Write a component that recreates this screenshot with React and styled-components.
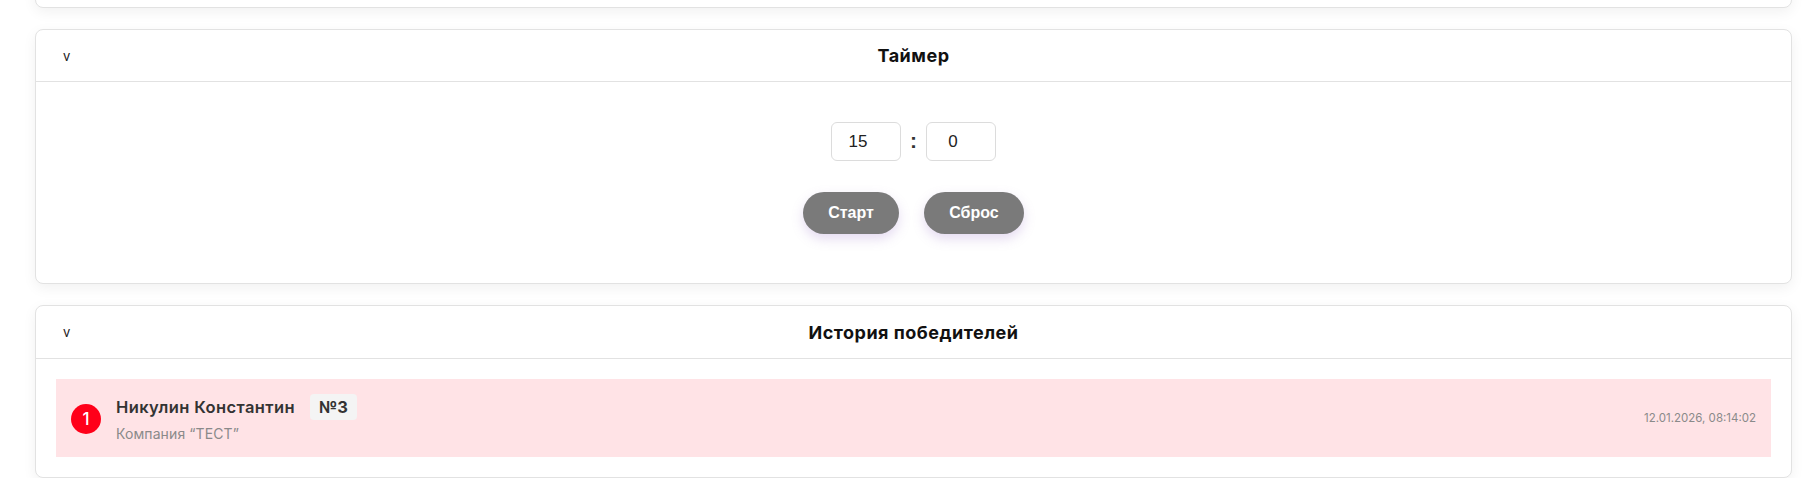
import React, { useState } from "react";
import styled, { createGlobalStyle } from "styled-components";

//-----------------------------------------------------------------------------------------------

const GlobalStyle = createGlobalStyle`
	body {
		margin: 0;
		background: #ffffff;
		font-family: "Inter", "Noto Sans", sans-serif;
		overflow: hidden;
	}
`;

const Page = styled.div`
	display: flex;
	flex-direction: column;
	gap: 21px;
	padding: 0 23px 0 35px;
`;

const Card = styled.section`
	background: #ffffff;
	border: 1px solid #e2e2e2;
	border-radius: 8px;
	box-shadow: 0 4px 14px rgba(0, 0, 0, 0.06);
`;

const HiddenCard = styled(Card)`
	height: 40px;
	margin-top: -34px;
`;

const Header = styled.div`
	display: grid;
	grid-template-columns: 1fr auto 1fr;
	align-items: center;
	height: ${(p) => p.$height || 51}px;
	padding: 0 27px;
	border-bottom: 1px solid #e2e2e2;
`;

const Toggle = styled.button`
	justify-self: start;
	background: none;
	border: none;
	padding: 0;
	font-family: "Inter", sans-serif;
	font-size: 13px;
	color: #222;
	cursor: pointer;
`;

const Title = styled.h2`
	margin: 0;
	font-size: 18px;
	font-weight: 700;
	letter-spacing: 0.5px;
	color: #111;
`;

const TimerBody = styled.div`
	display: flex;
	flex-direction: column;
	align-items: center;
	gap: 31px;
	padding: 40px 0 49px;
`;

const TimeRow = styled.div`
	display: flex;
	align-items: center;
	gap: 9px;
`;

const TimeInput = styled.input`
	box-sizing: border-box;
	width: 70px;
	height: 39px;
	border: 1px solid #dcdcdc;
	border-radius: 6px;
	padding: 0 16px 0 0;
	text-align: center;
	font-family: "Liberation Sans", Arial, sans-serif;
	font-size: 17px;
	color: #222;
	outline: none;
`;

const Colon = styled.span`
	font-family: "Liberation Sans", Arial, sans-serif;
	font-size: 21px;
	font-weight: 700;
	color: #333;
	width: 7px;
	text-align: center;
	margin-top: -2px;
`;

const ButtonRow = styled.div`
	display: flex;
	gap: 25px;
`;

const ActionButton = styled.button`
	height: 42px;
	width: ${(p) => p.$width}px;
	border: none;
	border-radius: 21px;
	background: #7a7a7a;
	color: #ffffff;
	font-family: "Liberation Sans", Arial, sans-serif;
	font-size: 16px;
	font-weight: 700;
	box-shadow: 0 5px 12px rgba(150, 110, 200, 0.25);
	cursor: pointer;
`;

const HistoryBody = styled.div`
	padding: 20px;
`;

const WinnerRow = styled.div`
	display: flex;
	align-items: center;
	height: 78px;
	padding: 0 15px;
	background: #ffe3e6;
`;

const Place = styled.div`
	display: flex;
	align-items: center;
	justify-content: center;
	flex: none;
	width: 30px;
	height: 30px;
	border-radius: 50%;
	background: #ff0019;
	color: #ffffff;
	font-size: 17px;
	font-weight: 500;
	margin-right: 15px;
	margin-top: 1px;
`;

const WinnerInfo = styled.div`
	display: flex;
	flex-direction: column;
	gap: 5px;
	flex: 1;
`;

const NameLine = styled.div`
	display: flex;
	align-items: center;
	gap: 15px;
`;

const Name = styled.span`
	font-size: 16.5px;
	font-weight: 600;
	letter-spacing: 0.4px;
	color: #333;
`;

const Tag = styled.span`
	padding: 3px 9px;
	border-radius: 4px;
	background: #f4f4f4;
	font-size: 16.5px;
	font-weight: 700;
	color: #333;
`;

const Company = styled.span`
	font-size: 14px;
	letter-spacing: 0.1px;
	color: #8a8a8a;
`;

const DateText = styled.span`
	font-size: 11.5px;
	color: #8a8a8a;
`;

//-----------------------------------------------------------------------------------------------

const winners = [
	{
		id: 1,
		name: "Никулин Константин",
		number: 3,
		company: "Компания “ТЕСТ”",
		date: "12.01.2026, 08:14:02",
	},
];

export default function App() {
	const [minutes, setMinutes] = useState("15");
	const [seconds, setSeconds] = useState("0");

	return (
		<>
			<GlobalStyle />
			<Page>
				<HiddenCard />

				<Card>
					<Header>
						<Toggle>v</Toggle>
						<Title>Таймер</Title>
					</Header>
					<TimerBody>
						<TimeRow>
							<TimeInput
								value={minutes}
								onChange={(e) => setMinutes(e.target.value)}
							/>
							<Colon>:</Colon>
							<TimeInput
								value={seconds}
								onChange={(e) => setSeconds(e.target.value)}
							/>
						</TimeRow>
						<ButtonRow>
							<ActionButton $width={96}>Старт</ActionButton>
							<ActionButton $width={100}>Сброс</ActionButton>
						</ButtonRow>
					</TimerBody>
				</Card>

				<Card>
					<Header $height={52}>
						<Toggle>v</Toggle>
						<Title>История победителей</Title>
					</Header>
					<HistoryBody>
						{winners.map((item, index) => (
							<WinnerRow key={item.id}>
								<Place>{index + 1}</Place>
								<WinnerInfo>
									<NameLine>
										<Name>{item.name}</Name>
										<Tag>№{item.number}</Tag>
									</NameLine>
									<Company>{item.company}</Company>
								</WinnerInfo>
								<DateText>{item.date}</DateText>
							</WinnerRow>
						))}
					</HistoryBody>
				</Card>
			</Page>
		</>
	);
}
